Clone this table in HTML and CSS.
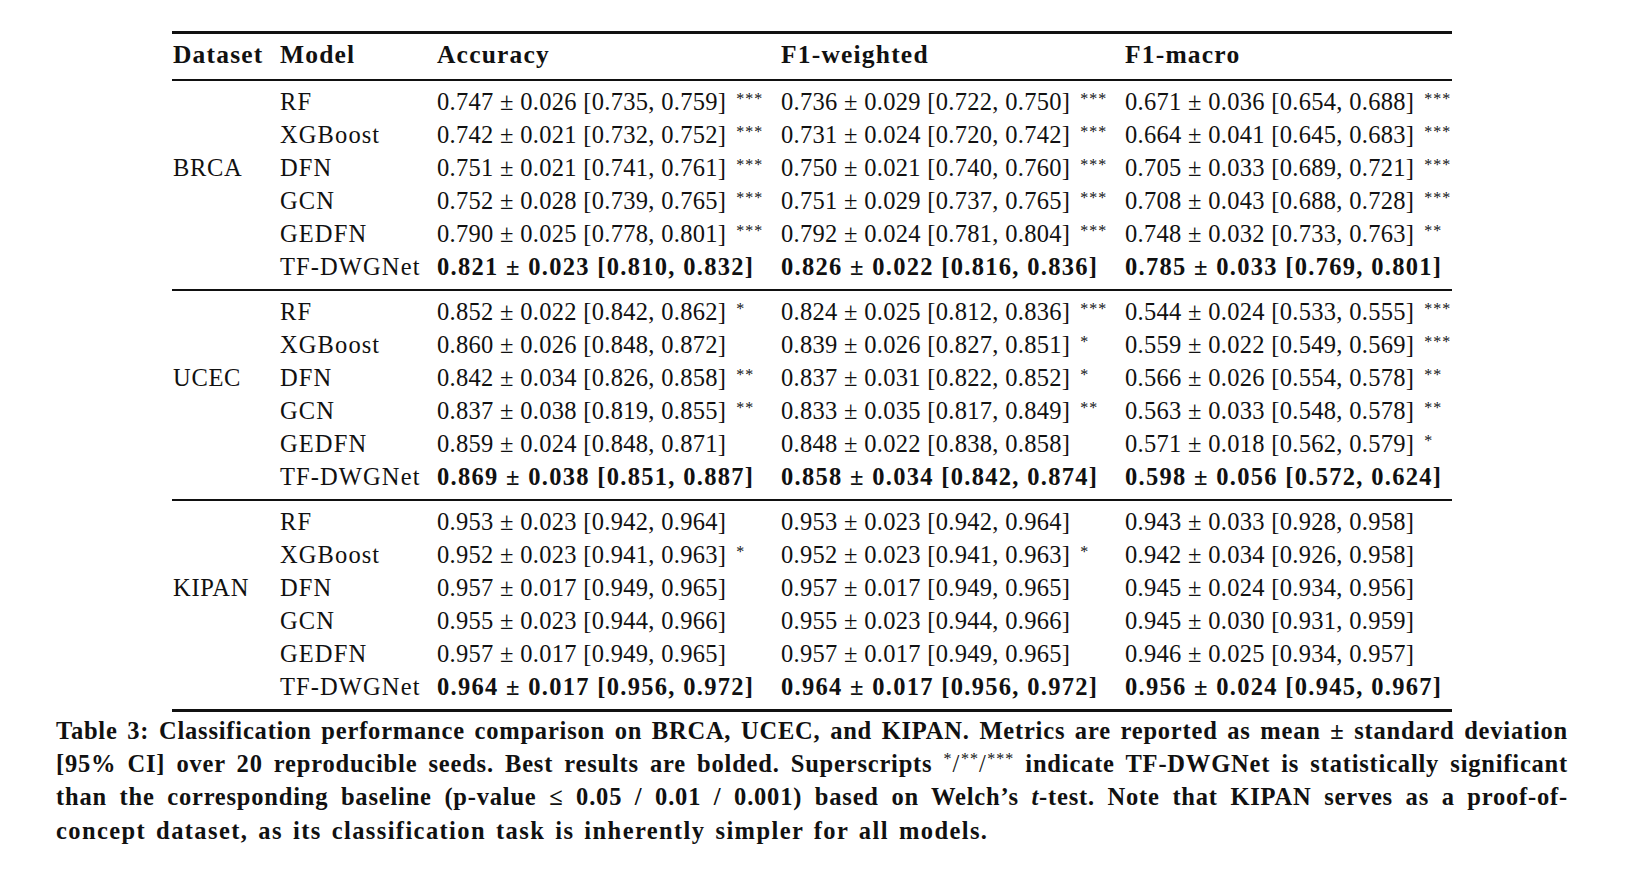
FILE: index.html
```html
<!DOCTYPE html>
<html lang="en">
<head>
<meta charset="utf-8">
<title>Table 3</title>
<link rel="stylesheet" href="styles.css">
</head>
<body>
<div class="page">
  <table class="results">
    <colgroup>
      <col class="c-ds"><col class="c-model"><col class="c-met"><col class="c-met"><col class="c-last">
    </colgroup>
    <thead>
      <tr><th>Dataset</th><th>Model</th><th>Accuracy</th><th>F1-weighted</th><th>F1-macro</th></tr>
    </thead>
    <tbody>
      <tr><td></td><td class="m">RF</td><td>0.747 ± 0.026 [0.735, 0.759]<sup>***</sup></td><td>0.736 ± 0.029 [0.722, 0.750]<sup>***</sup></td><td>0.671 ± 0.036 [0.654, 0.688]<sup>***</sup></td></tr>
      <tr><td></td><td class="m">XGBoost</td><td>0.742 ± 0.021 [0.732, 0.752]<sup>***</sup></td><td>0.731 ± 0.024 [0.720, 0.742]<sup>***</sup></td><td>0.664 ± 0.041 [0.645, 0.683]<sup>***</sup></td></tr>
      <tr><td class="ds">BRCA</td><td class="m">DFN</td><td>0.751 ± 0.021 [0.741, 0.761]<sup>***</sup></td><td>0.750 ± 0.021 [0.740, 0.760]<sup>***</sup></td><td>0.705 ± 0.033 [0.689, 0.721]<sup>***</sup></td></tr>
      <tr><td></td><td class="m">GCN</td><td>0.752 ± 0.028 [0.739, 0.765]<sup>***</sup></td><td>0.751 ± 0.029 [0.737, 0.765]<sup>***</sup></td><td>0.708 ± 0.043 [0.688, 0.728]<sup>***</sup></td></tr>
      <tr><td></td><td class="m">GEDFN</td><td>0.790 ± 0.025 [0.778, 0.801]<sup>***</sup></td><td>0.792 ± 0.024 [0.781, 0.804]<sup>***</sup></td><td>0.748 ± 0.032 [0.733, 0.763]<sup>**</sup></td></tr>
      <tr><td></td><td class="m">TF-DWGNet</td><td class="b">0.821 ± 0.023 [0.810, 0.832]</td><td class="b">0.826 ± 0.022 [0.816, 0.836]</td><td class="b">0.785 ± 0.033 [0.769, 0.801]</td></tr>
    </tbody>
    <tbody>
      <tr><td></td><td class="m">RF</td><td>0.852 ± 0.022 [0.842, 0.862]<sup>*</sup></td><td>0.824 ± 0.025 [0.812, 0.836]<sup>***</sup></td><td>0.544 ± 0.024 [0.533, 0.555]<sup>***</sup></td></tr>
      <tr><td></td><td class="m">XGBoost</td><td>0.860 ± 0.026 [0.848, 0.872]</td><td>0.839 ± 0.026 [0.827, 0.851]<sup>*</sup></td><td>0.559 ± 0.022 [0.549, 0.569]<sup>***</sup></td></tr>
      <tr><td class="ds">UCEC</td><td class="m">DFN</td><td>0.842 ± 0.034 [0.826, 0.858]<sup>**</sup></td><td>0.837 ± 0.031 [0.822, 0.852]<sup>*</sup></td><td>0.566 ± 0.026 [0.554, 0.578]<sup>**</sup></td></tr>
      <tr><td></td><td class="m">GCN</td><td>0.837 ± 0.038 [0.819, 0.855]<sup>**</sup></td><td>0.833 ± 0.035 [0.817, 0.849]<sup>**</sup></td><td>0.563 ± 0.033 [0.548, 0.578]<sup>**</sup></td></tr>
      <tr><td></td><td class="m">GEDFN</td><td>0.859 ± 0.024 [0.848, 0.871]</td><td>0.848 ± 0.022 [0.838, 0.858]</td><td>0.571 ± 0.018 [0.562, 0.579]<sup>*</sup></td></tr>
      <tr><td></td><td class="m">TF-DWGNet</td><td class="b">0.869 ± 0.038 [0.851, 0.887]</td><td class="b">0.858 ± 0.034 [0.842, 0.874]</td><td class="b">0.598 ± 0.056 [0.572, 0.624]</td></tr>
    </tbody>
    <tbody class="final">
      <tr><td></td><td class="m">RF</td><td>0.953 ± 0.023 [0.942, 0.964]</td><td>0.953 ± 0.023 [0.942, 0.964]</td><td>0.943 ± 0.033 [0.928, 0.958]</td></tr>
      <tr><td></td><td class="m">XGBoost</td><td>0.952 ± 0.023 [0.941, 0.963]<sup>*</sup></td><td>0.952 ± 0.023 [0.941, 0.963]<sup>*</sup></td><td>0.942 ± 0.034 [0.926, 0.958]</td></tr>
      <tr><td class="ds">KIPAN</td><td class="m">DFN</td><td>0.957 ± 0.017 [0.949, 0.965]</td><td>0.957 ± 0.017 [0.949, 0.965]</td><td>0.945 ± 0.024 [0.934, 0.956]</td></tr>
      <tr><td></td><td class="m">GCN</td><td>0.955 ± 0.023 [0.944, 0.966]</td><td>0.955 ± 0.023 [0.944, 0.966]</td><td>0.945 ± 0.030 [0.931, 0.959]</td></tr>
      <tr><td></td><td class="m">GEDFN</td><td>0.957 ± 0.017 [0.949, 0.965]</td><td>0.957 ± 0.017 [0.949, 0.965]</td><td>0.946 ± 0.025 [0.934, 0.957]</td></tr>
      <tr><td></td><td class="m">TF-DWGNet</td><td class="b">0.964 ± 0.017 [0.956, 0.972]</td><td class="b">0.964 ± 0.017 [0.956, 0.972]</td><td class="b">0.956 ± 0.024 [0.945, 0.967]</td></tr>
    </tbody>
  </table>
  <div class="caption">
    <div class="line">Table 3: Classification performance comparison on BRCA, UCEC, and KIPAN. Metrics are reported as mean ± standard deviation</div>
    <div class="line">[95% CI] over 20 reproducible seeds. Best results are bolded. Superscripts <span class="stars"><sup>*</sup>/<sup>**</sup>/<sup>***</sup></span> indicate TF-DWGNet is statistically significant</div>
    <div class="line">than the corresponding baseline (p-value ≤ 0.05 / 0.01 / 0.001) based on Welch’s <i>t</i>-test. Note that KIPAN serves as a proof-of-</div>
    <div class="line last">concept dataset, as its classification task is inherently simpler for all models.</div>
  </div>
</div>
</body>
</html>
```

FILE: styles.css
```css
html, body {
  margin: 0;
  padding: 0;
  background: #ffffff;
}

body {
  color: #111111;
  font-family: "Liberation Serif", "Times New Roman", serif;
}

.page {
  padding-top: 31px;
  width: 1625px;
}

.results {
  margin-left: 172px;
  width: 1280px;
  table-layout: fixed;
  border-collapse: separate;
  border-spacing: 0;
  font-size: 24.5px;
  line-height: 33px;
  letter-spacing: 0.3px;
}

.c-ds { width: 108px; }
.c-model { width: 157px; }
.c-met { width: 344px; }
.c-last { width: 327px; }

.results th,
.results td {
  padding: 0;
  text-align: left;
  white-space: nowrap;
  vertical-align: top;
}

.results th {
  font-weight: bold;
  font-size: 25.5px;
  letter-spacing: 1.2px;
  padding-top: 4px;
  padding-bottom: 8px;
  border-top: 3px solid #111111;
  border-bottom: 2px solid #111111;
}

.results th:first-child,
.results td:first-child {
  padding-left: 1px;
}

.results tbody tr:first-child td {
  padding-top: 3.5px;
}

.results tbody tr:last-child td {
  padding-bottom: 6.5px;
  border-bottom: 2px solid #111111;
}

.results tbody.final tr:last-child td {
  border-bottom-width: 3px;
}

.results td.ds {
  letter-spacing: 0.7px;
}

.results td.m {
  letter-spacing: 1.1px;
}

.results td.b {
  font-weight: bold;
  letter-spacing: 1.3px;
}

.results sup {
  font-size: 16px;
  line-height: 0;
  vertical-align: 6px;
  margin-left: 10px;
  letter-spacing: 1px;
}

.caption {
  margin-left: 56px;
  margin-top: 2px;
  width: 1512px;
  font-weight: bold;
  font-size: 24.5px;
  line-height: 33.2px;
  letter-spacing: 0.8px;
}

.caption .line {
  text-align: justify;
  text-align-last: justify;
  white-space: nowrap;
}

.caption .line.last {
  text-align: left;
  text-align-last: left;
  letter-spacing: 1.4px;
  word-spacing: 2.5px;
}

.caption .stars {
  font-weight: normal;
  letter-spacing: 1.5px;
}

.caption .stars sup {
  font-size: 16px;
  line-height: 0;
  vertical-align: 8px;
  letter-spacing: 1px;
}
```
